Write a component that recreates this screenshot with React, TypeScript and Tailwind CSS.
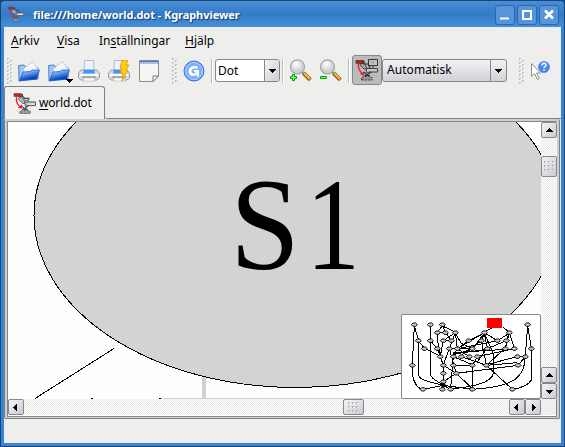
import React from "react";

const groove =
  "bg-[repeating-conic-gradient(#e9ebe9_0_25%,#fdfdfd_0_50%)] bg-[length:2px_2px]";
const face = "bg-gradient-to-br from-[#f5f5f7] to-[#cbc9d2] border border-[#86898c] rounded-[2px]";

function Microscope({ className }: { className: string }) {
  return (
    <svg viewBox="0 0 22 22" className={className}>
      <path d="M5 4h4v-2M9 4l2 2h4v2" stroke="#444" strokeWidth="1.200" fill="none" />
      <path d="M6 5l4 1 2 5h-3L5 7z" fill="#b5b5b5" stroke="#555" strokeWidth=".7" />
      <path d="M10 8h4l1 3" stroke="#777" strokeWidth="1.300" fill="none" />
      <path d="M11 9.500h10.500v3.500H14l-2 1z" fill="#bdbdbd" stroke="#444" strokeWidth=".8" />
      <path d="M14 11.500h7" stroke="#f4f4f4" />
      <path d="M8 13l3 3 4-3M9 16.500h5" stroke="#555" strokeWidth="1.200" fill="none" />
      <path d="M6.500 20.500v-2l3-1h4l3 1v2z" fill="#9c9c9c" stroke="#444" strokeWidth=".8" strokeDasharray="2 1" />
      <path d="M1 1.500h7v2.800H1z" fill="#c02828" stroke="#533" strokeWidth=".6" />
      <path d="M3.500 5c-1 4 .5 7 4 9.500" fill="none" stroke="#f01820" strokeWidth="1.300" />
      <path d="M8.500 12v4l-4-1z" fill="#f01820" />
    </svg>
  );
}

function OpenFolder() {
  return (
    <svg viewBox="0 0 22 22" className="h-[22px] w-[22px]">
      <defs>
        <linearGradient id="fold" x1="0" y1="0" x2=".5" y2="1">
          <stop offset="0" stopColor="#d4ecff" />
          <stop offset=".45" stopColor="#5a9cf2" />
          <stop offset=".85" stopColor="#0c45c4" />
          <stop offset="1" stopColor="#0836a8" />
        </linearGradient>
      </defs>
      <path d="M.7 5.500L6 5l2 2 12 1v11L1 21z" fill="#9cc8f6" stroke="#2b62b8" strokeWidth=".8" />
      <path d="M5 9l9.500-7.500L20 9v5H6z" fill="#f4f6ff" stroke="#a7b2cf" strokeWidth=".7" />
      <path d="M1.500 20.500L5 12l7-.5 2-1.500h7.500L18.500 19z" fill="url(#fold)" stroke="#1c4db0" strokeWidth=".7" />
    </svg>
  );
}

function Printer({ flash = false }: { flash?: boolean }) {
  return (
    <svg viewBox="0 0 22 22" className="h-[22px] w-[22px]">
      <path d="M3 10h16l2.500 3v5l-2.500 2H3l-2.500-2v-5z" fill="#d9dae0" stroke="#8c8e99" strokeWidth=".8" />
      <path d="M6.500.5h9l.5 10H6z" fill="#edf3ff" stroke="#9ba7bd" strokeWidth=".7" />
      <path d="M6 9.500h10l1 4H5z" fill="#3e98f2" />
      <path d="M2 14h18v2H2z" fill="#f8f8fa" />
      <path d="M4 17h14" stroke="#777b8a" />
      <path d="M6 18h10l1 3H5z" fill="#fff" stroke="#a8acb8" strokeWidth=".6" />
      {flash && <path d="M14 0h6l-2 5h3l-3 5h2l-6 11 1-8h-3l2-5h-2z" fill="#ffcf10" stroke="#e09000" strokeWidth=".8" />}
    </svg>
  );
}

function Page() {
  return (
    <svg viewBox="0 0 20 22" className="h-[22px] w-5">
      <path d="M.5.5h19V16L14 21.500H.5z" fill="#f5f6f4" stroke="#8b8e8c" />
      <path d="M1 1h18v1.500H1z" fill="#4c78d0" />
      <path d="M1 2.500h18v1.500H1z" fill="#a9c0ea" />
      <path d="M14 21.500V16h5.500z" fill="#fff" stroke="#777" />
    </svg>
  );
}

function Magnifier({ plus = false }: { plus?: boolean }) {
  return (
    <svg viewBox="0 0 23 23" className="h-[23px] w-[23px]">
      <defs>
        <radialGradient id="lens" cx=".4" cy=".3">
          <stop offset="0" stopColor="#fff" />
          <stop offset="1" stopColor="#cfd2d5" />
        </radialGradient>
      </defs>
      <path d="M13 13l2 2" stroke="#888" strokeWidth="2" />
      <path d="M14.500 14l6.800 6.800" stroke="#8a5a10" strokeWidth="4" />
      <path d="M15 14l6 6" stroke="#f7b548" strokeWidth="2.200" />
      <circle cx="8.500" cy="7.800" r="7" fill="url(#lens)" stroke="#a2a5a8" strokeWidth="1.200" />
      {plus ? (
        <path d="M3.500 15.500h2v2h2v2h-2v2h-2v-2h-2v-2h2z" fill="#7f7" stroke="#0a9a0a" />
      ) : (
        <path d="M1.500 17.500h6v2h-6z" fill="#7f7" stroke="#0a9a0a" />
      )}
    </svg>
  );
}

function Grip({ className }: { className: string }) {
  return (
    <svg viewBox="0 0 6 26" className={"h-[26px] w-[6px] shrink-0 " + className} shapeRendering="crispEdges">
      {[0, 1, 2, 3, 4, 5, 6].map((i) => (
        <g key={i} fill="#bfc2bf">
          <path d={`M0 ${i * 4}h2v1h-1v1h-1z`} />
          <path d={`M3 ${i * 4 + 2}h2v1h-1v1h-1z`} />
        </g>
      ))}
    </svg>
  );
}

function Arrow({ dir, className = "" }: { dir: "up" | "down" | "left" | "right"; className?: string }) {
  const d = {
    up: "M4 2h1v1h1v1h1v1h1v1H1V5h1V4h1V3h1z",
    down: "M1 3h7v1H7v1H6v1H5v1H4V6H3V5H2V4H1z",
    left: "M5 1v7H4V7H3V6H2V5H1V4h1V3h1V2h1V1z",
    right: "M3 1h1v1h1v1h1v1h1v1H6v1H5v1H4v1H3z",
  }[dir];
  return (
    <svg viewBox="0 0 9 9" className={"h-[9px] w-[9px] " + className} shapeRendering="crispEdges">
      <path d={d} />
    </svg>
  );
}

function ScrollButton({ dir, className = "" }: { dir: "up" | "down" | "left" | "right"; className?: string }) {
  return (
    <div className={`flex h-4 w-4 shrink-0 items-center justify-center ${face} ${className}`}>
      <Arrow dir={dir} className="shrink-0" />
    </div>
  );
}

function Thumb({ className }: { className: string }) {
  return (
    <div className={`flex shrink-0 items-center justify-center ${face} ${className}`}>
      <svg viewBox="0 0 11 11" className="h-[11px] w-[11px]" shapeRendering="crispEdges">
        {[0, 4, 8].map((x) =>
          [0, 4, 8].map((y) => (
            <g key={`${x}-${y}`}>
              <path d={`M${x} ${y}h2v2h-2z`} fill="#fff" />
              <path d={`M${x} ${y}h2v1h-1v1h-1z`} fill="#b0b1b8" />
            </g>
          )),
        )}
      </svg>
    </div>
  );
}

function TitleButton({ children }: { children: React.ReactNode }) {
  return (
    <div className="flex h-5 w-5 items-center justify-center rounded-[3px] border border-[#2b67ab] bg-[#5795db]">
      <svg viewBox="0 0 18 18" className="h-[18px] w-[18px]" fill="none" stroke="#fff" strokeWidth="2">
        {children}
      </svg>
    </div>
  );
}

const nodes: [number, number][] = [
  [58, 44], [106, 44], [142, 44], [398, 44], [127, 68], [151, 68], [181, 68], [268, 68], [343, 68],
  [70, 92], [106, 92], [145, 92], [169, 92], [221, 92], [259, 92], [307, 92], [334, 92],
  [88, 116], [127, 116], [163, 116], [187, 116], [232, 116], [277, 116], [331, 116], [358, 116], [409, 116],
  [136, 140], [175, 140], [199, 140], [223, 140], [247, 140], [367, 140], [391, 140],
  [52, 166], [145, 166], [175, 166], [232, 166], [274, 166], [369, 166],
  [145, 190], [184, 190], [145, 215], [84, 238], [142, 238], [167, 238], [232, 238], [352, 238],
];

const edges =
  "M58 48L52 162V190C54 216 68 236 84 238M58 48L70 88V190C70 214 112 216 145 226M70 92L88 114L136 138" +
  "M106 48V190C108 208 124 210 145 226M106 92L127 116L136 140M142 48L127 66V88L136 138M142 48L151 66L169 92M142 48L181 66" +
  "M181 68L145 92L136 138M181 68L187 116M181 68L163 116M181 70L199 100L232 116M127 68L151 68M145 92L169 92" +
  "M268 68L221 92L187 116M268 68L187 116L175 140M268 70L232 116M268 70L259 92L274 164M268 70L295 130V190C290 226 200 232 167 238" +
  "M268 70L277 114L247 156M268 68L307 92M290 54L268 66M324 52L343 66M343 70L307 92L187 116M343 70L334 92L277 116M343 70L331 114L274 166" +
  "M343 70L358 114M398 48L391 138C390 200 362 230 232 238M398 48L409 114V210C400 228 378 234 352 238" +
  "M163 116L145 164M187 116L175 140L167 236M187 116L223 140M232 118L175 134M163 116H232M277 118L175 132" +
  "M331 118L175 128M358 116L247 140M175 140L232 164M199 140L274 166M247 140L232 166" +
  "M391 140L367 140L274 164M391 140L369 166L184 190M367 158L274 166M136 140L145 166V226M163 116L184 190L232 236" +
  "M175 166L232 166V238M145 166L184 190L145 215M274 166L352 238M145 226L142 238M145 226L167 238M145 226L84 238" +
  "M145 226L232 238M259 92L199 136";

function Overview() {
  return (
    <svg viewBox="21 15 417 252" className="block h-[84px] w-[139px]">
      <path d={edges} fill="none" stroke="#000" strokeWidth="3" shapeRendering="crispEdges" />
      {nodes.map(([x, y]) => (
        <path key={`${x}-${y}`} d={`M${x - 9} ${y}l5-5h8l5 5-5 5h-8z`} fill="#c8cac8" stroke="#000" strokeWidth="2.800" />
      ))}
      <circle cx="145" cy="226" r="7" />
      <path d="M276 24h45v30h-45z" fill="#f00" shapeRendering="crispEdges" />
    </svg>
  );
}

function Menu({ before = "", hot, after, className }: { before?: string; hot: string; after: string; className: string }) {
  return (
    <span className={"block shrink-0 whitespace-nowrap " + className}>
      {before}
      <span className="underline underline-offset-2">{hot}</span>
      {after}
    </span>
  );
}

function Separator({ className }: { className: string }) {
  return <div className={"h-6 w-[2px] shrink-0 border-l border-[#b9bbb9] bg-white " + className} />;
}

export default function App() {
  return (
    <div className="flex h-[447px] w-[565px] flex-col overflow-hidden bg-[#12467f] px-px pb-px font-['Noto_Sans','Open_Sans',sans-serif] text-[12px] leading-4 text-black">
      <header className="flex h-[27px] shrink-0 items-center rounded-t-[4px] border-t border-[#1b4674] bg-gradient-to-b from-[#4a8ed8] via-[#347ac4] to-[#4590df] pl-[7px] pr-[5px]">
        <Microscope className="h-4 w-4 shrink-0" />
        <h1 className="ml-[9px] mt-[2px] grow whitespace-nowrap text-[11px] font-bold tracking-[-0.06px] text-white [text-shadow:1px_1px_1px_#153c68]">
          file:///home/world.dot - Kgraphviewer
        </h1>
        <div className="mt-[2px] flex gap-[2px]">
          <TitleButton><path d="M4 12.500h9" /></TitleButton>
          <TitleButton><path d="M5 5h8v8H5z" /></TitleButton>
          <TitleButton><path d="M5 4.500l8 8M13 4.500l-8 8" strokeWidth="2.500" /></TitleButton>
        </div>
      </header>

      <main className="flex min-h-0 grow flex-col border-x-[3px] border-b-[3px] border-[#3a84d6] bg-[#eeefed]">
        <nav className="flex h-7 shrink-0 pt-[6px]">
          <Menu hot="A" after="rkiv" className="ml-[7px] w-[46px]" />
          <Menu hot="V" after="isa" className="w-[42px]" />
          <Menu before="In" hot="s" after="tällningar" className="w-[86px] tracking-[-0.03px]" />
          <Menu hot="H" after="jälp" className="w-10" />
        </nav>

        <div className="flex h-[31px] shrink-0 items-center">
          <Grip className="ml-[3px]" />
          <div className="ml-[5px] w-[22px]"><OpenFolder /></div>
          <div className="relative ml-2 w-[22px]">
            <OpenFolder />
            <Arrow dir="down" className="absolute -bottom-[3px] left-[17px]" />
          </div>
          <div className="ml-2 w-[22px]"><Printer /></div>
          <div className="ml-2 w-[22px]"><Printer flash /></div>
          <div className="ml-[9px] w-5"><Page /></div>
          <Grip className="ml-[13px]" />
          <svg viewBox="0 0 22 22" className="ml-[5px] h-[22px] w-[22px] shrink-0">
            <circle cx="11" cy="11" r="10" fill="#5a92f0" stroke="#3c6ed0" />
            <circle cx="11" cy="11" r="8.700" fill="#7fb0fa" stroke="#c4dcff" strokeWidth=".8" />
            <path d="M15 6.500C9 4.500 5.500 8 5.500 11.500S9 17 12 15.500l1.500-1.500v2.500H16v-6.500h-6l1.500 2h1.500c-1 2-4.500 2-4.500-.8S11.500 7.500 14 9z" fill="#fff" />
          </svg>
          <Separator className="ml-[6px]" />
          <div className="mb-px ml-[2px] flex h-[23px] w-[65px] shrink-0 overflow-hidden rounded-[3px] border border-[#858887] bg-white">
            <span className="w-12 pl-[2px] pt-[3px]">Dot</span>
            <div className="flex grow items-center justify-center border-l border-[#858887] bg-gradient-to-br from-[#f4f4f6] to-[#cdccd3]"><Arrow dir="down" /></div>
          </div>
          <Separator className="ml-[2px]" />
          <div className="ml-[5px] w-[23px]"><Magnifier plus /></div>
          <div className="ml-[7px] w-[23px]"><Magnifier /></div>
          <Separator className="ml-[6px]" />
          <div className="mb-px ml-[2px] flex h-[30px] w-[30px] shrink-0 items-center justify-center rounded-[3px] border border-[#858887] bg-[#b9bbbd]">
            <svg viewBox="0 0 24 24" className="h-6 w-6">
              <path d="M13.500 1.500h9v6h-9z" fill="#c4c4c4" stroke="#333" />
              <path d="M15 3.500l4 2M18 2.500v3" stroke="#d77" strokeWidth=".8" fill="none" />
              <path d="M18 8v2" stroke="#333" />
              <path d="M6 5l4 1 2 5h-3L5 7z" fill="#a5a5a5" stroke="#333" strokeWidth=".8" />
              <path d="M9 3v3h4l2 4" stroke="#333" strokeWidth="1.200" fill="none" />
              <path d="M11 10.500h11.500v3.500H14l-2 1z" fill="#c8c8c8" stroke="#333" strokeWidth=".9" />
              <path d="M9 14l3 3 4-3M9 17.500h6" stroke="#333" strokeWidth="1.200" fill="none" />
              <path d="M6.500 22v-2.500l3-1h4l3.500 1V22z" fill="#999" stroke="#333" strokeWidth=".9" strokeDasharray="2 1" />
              <path d="M1 2.500h7.500v2.800H1z" fill="#b42424" stroke="#422" strokeWidth=".7" />
              <path d="M3.500 6c-1 4 1 7 4 10" stroke="#f01820" strokeWidth="1.400" fill="none" />
              <path d="M9 13.500v4l-4-1z" fill="#f01820" />
            </svg>
          </div>
          <div className="mb-px flex h-[23px] w-[125px] shrink-0 overflow-hidden rounded-[3px] border border-[#858887] bg-gradient-to-b from-[#f2f2f4] to-[#d3d1d8]">
            <span className="w-[107px] pl-1 pt-[2px] tracking-[0.05px]">Automatisk</span>
            <div className="flex grow items-center justify-center border-l border-[#858887]"><Arrow dir="down" /></div>
          </div>
          <Grip className="ml-3" />
          <svg viewBox="0 0 22 22" className="ml-[4px] h-[22px] w-[22px] shrink-0">
            <path d="M2.500 3.500v13l3-3 3 6 2-1-3-5.500h4z" fill="#fff" stroke="#8c8f90" />
            <circle cx="15" cy="7" r="5.500" fill="#4b88f4" stroke="#2b5bd0" strokeWidth=".5" />
            <path d="M13 5.500c0-3 4-3 4-.5 0 1.500-2 1.500-2 3m0 1v1.500" fill="none" stroke="#fff" strokeWidth="1.500" />
          </svg>
        </div>

        <div className="flex h-[33px] shrink-0">
          <div className="flex w-[101px] items-center rounded-tl-[3px] rounded-tr-[3px] border-l border-r border-t border-[#7f8280] bg-[#f0f1ef]">
            <Microscope className="ml-[8px] h-[23px] w-[23px] shrink-0" />
            <Menu hot="w" after="orld.dot" className="ml-[3px] tracking-[-0.2px]" />
          </div>
          <div className="grow rounded-bl-[3px] border-b border-[#7f8280]" />
        </div>

        <section className="flex h-[300px] w-[556px] shrink-0 flex-col rounded-[2px] border border-t-0 border-[#7f8280] bg-[#cfd1ce] px-[2px] pb-px pt-[2px]">
          <div className="flex min-h-0 grow flex-col border border-[#858886] bg-white">
            <div className="flex h-[277px] shrink-0">
              <div className="relative w-[533px] shrink-0 overflow-hidden bg-[#fefefe]">
                <svg viewBox="8 122 533 277" className="block h-[277px] w-[533px]" shapeRendering="crispEdges">
                  <path d="M204 370v29" stroke="#d0d2cf" strokeWidth="4" />
                  <ellipse cx="296" cy="215.500" rx="262" ry="172" fill="#d2d4d1" stroke="#000" />
                  <path d="M35 398.500L114 348.500M91 398.500h2M159 398.500h2" stroke="#000" fill="none" />
                  <path d="M161 398.500h380" stroke="#d0d2cf" />
                  <text fontSize="132" className="font-['Liberation_Serif',serif]">
                    <tspan x="230" y="268.500" textLength="70" lengthAdjust="spacingAndGlyphs">S</tspan>
                  </text>
                  <text
                    x="306"
                    y="268.500"
                    fontSize="132"
                    textLength="54"
                    lengthAdjust="spacingAndGlyphs"
                    className="font-['Liberation_Serif',serif]"
                  >
                    1
                  </text>
                </svg>
                <div className="absolute bottom-0 right-0 h-[85px] w-[140px] rounded-[2px] border border-[#858886] bg-white">
                  <Overview />
                </div>
              </div>
              <div className={`flex w-4 flex-col ${groove}`}>
                <ScrollButton dir="up" />
                <Thumb className="mt-[18px] h-[21px] w-4" />
                <ScrollButton dir="up" className="mt-auto" />
                <ScrollButton dir="down" />
              </div>
            </div>
            <div className="flex h-4 shrink-0">
              <div className={`flex w-[533px] ${groove}`}>
                <ScrollButton dir="left" />
                <Thumb className="ml-[319px] h-4 w-[21px]" />
                <ScrollButton dir="left" className="ml-auto" />
                <ScrollButton dir="right" />
              </div>
              <div className="grow bg-[#eeefed]" />
            </div>
          </div>
        </section>
      </main>
    </div>
  );
}
